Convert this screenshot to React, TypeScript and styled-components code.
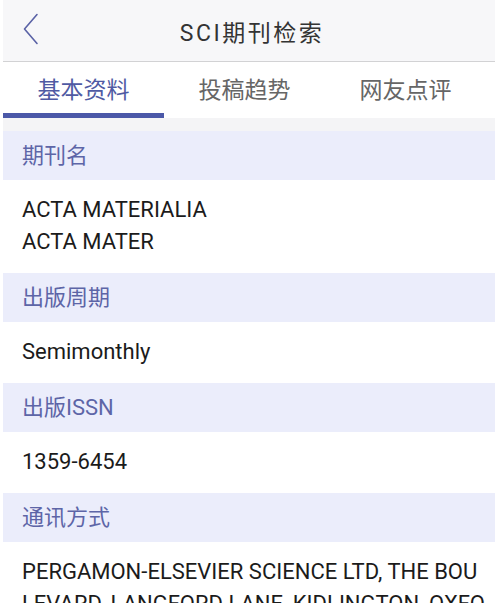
import styled, { createGlobalStyle } from "styled-components";

const GlobalStyle = createGlobalStyle`
  body {
    margin: 0;
    background: #ffffff;
    font-family: Roboto, "Noto Sans CJK SC", sans-serif;
  }
`;

const Page = styled.div`
  margin: 0 2px 0 3px;
  display: flex;
  flex-direction: column;
`;

const Header = styled.header`
  height: 61px;
  background: #f7f7f9;
  border-bottom: 1px solid #d2d2d4;
  display: flex;
  align-items: center;
  justify-content: center;
  position: relative;
`;

const BackButton = styled.button`
  position: absolute;
  left: 15px;
  top: 12px;
  width: 24px;
  height: 34px;
  padding: 0;
  border: none;
  background: none;
  display: flex;
  align-items: center;
  justify-content: center;
`;

const Title = styled.h1`
  margin: 0 0 0 6px;
  font-size: 23px;
  font-weight: 400;
  letter-spacing: 2.5px;
  color: #333333;
`;

const Tabs = styled.nav`
  display: grid;
  grid-template-columns: repeat(3, 161px);
  background: #ffffff;
`;

const Tab = styled.div<{ $active?: boolean }>`
  height: 51px;
  display: flex;
  align-items: center;
  justify-content: center;
  font-size: 23px;
  color: ${(p) => (p.$active ? "#4f5aa3" : "#666666")};
  border-bottom: 5px solid ${(p) => (p.$active ? "#4b58a8" : "transparent")};
`;

const Gap = styled.div`
  height: 13px;
  background: #f4f4f6;
`;

const SectionHead = styled.div`
  height: 49px;
  line-height: 49px;
  padding-left: 19px;
  background: #ebedfb;
  color: #5d65a7;
  font-size: 22px;
`;

const SectionBody = styled.div`
  padding: 14px 10px 15px 19px;
  line-height: 32px;
  font-size: 22px;
  color: #1b1b1b;
  word-break: break-all;
`;

const sections = [
  { label: "期刊名", lines: ["ACTA MATERIALIA", "ACTA MATER"] },
  { label: "出版周期", lines: ["Semimonthly"] },
  { label: "出版ISSN", lines: ["1359-6454"] },
  {
    label: "通讯方式",
    lines: ["PERGAMON-ELSEVIER SCIENCE LTD, THE BOULEVARD, LANGFORD LANE, KIDLINGTON, OXFORD, ENGLAND, OX5 1GB"],
  },
];

const App = () => {
  return (
    <>
      <GlobalStyle />
      <Page>
        <Header>
          <BackButton aria-label="返回">
            <svg width="17" height="32" viewBox="0 0 17 32" fill="none">
              <path d="M15 1.5 L2.5 16 L15 30.5" stroke="#5a62a6" strokeWidth="1.6" strokeLinecap="round" strokeLinejoin="round" />
            </svg>
          </BackButton>
          <Title>SCI期刊检索</Title>
        </Header>
        <Tabs>
          <Tab $active>基本资料</Tab>
          <Tab>投稿趋势</Tab>
          <Tab>网友点评</Tab>
        </Tabs>
        <Gap />
        {sections.map((s) => (
          <div key={s.label}>
            <SectionHead>{s.label}</SectionHead>
            <SectionBody>
              {s.lines.map((l) => (
                <div key={l}>{l}</div>
              ))}
            </SectionBody>
          </div>
        ))}
      </Page>
    </>
  );
};

export default App;
